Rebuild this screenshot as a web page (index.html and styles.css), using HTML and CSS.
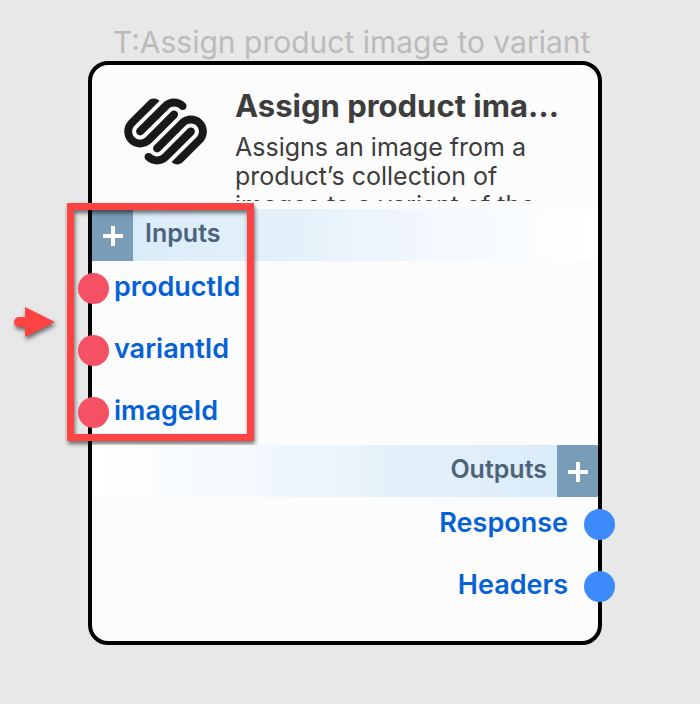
FILE: index.html
```html
<!DOCTYPE html>
<html lang="en">
<head>
<meta charset="utf-8">
<title>Assign product image to variant</title>
<link rel="stylesheet" href="styles.css">
</head>
<body>
<main class="canvas">
  <p class="node-label">T:Assign product image to variant</p>
  <article class="node">
    <header class="node-header">
      <svg class="logo" viewBox="0 2 24 20" aria-hidden="true"><path d="M22.655 8.719c-1.802-1.801-4.726-1.801-6.564 0l-7.351 7.35c-.45.45-.45 1.2 0 1.65.45.449 1.2.449 1.65 0l7.351-7.351c.899-.899 2.362-.899 3.264 0 .9.9.9 2.364 0 3.264l-7.239 7.239c.9.899 2.362.899 3.263 0l5.589-5.589c1.836-1.838 1.836-4.763.037-6.563zm-2.475 2.437c-.451-.45-1.201-.45-1.65 0l-7.354 7.389c-.9.899-2.361.899-3.262 0-.45-.45-1.2-.45-1.65 0s-.45 1.2 0 1.649c1.801 1.801 4.726 1.801 6.564 0l7.351-7.35c.449-.487.449-1.239.001-1.688zm-2.439-7.35c-1.801-1.801-4.726-1.801-6.564 0l-7.351 7.351c-.45.449-.45 1.199 0 1.649s1.2.45 1.65 0l7.395-7.351c.9-.899 2.371-.899 3.27 0 .451.45 1.201.45 1.65 0 .421-.487.421-1.199-.05-1.649zm-2.475 2.475c-.45-.449-1.2-.449-1.65 0l-7.351 7.351c-.899.9-2.362.9-3.263 0-.9-.899-.9-2.363 0-3.263l7.239-7.239c-.899-.9-2.362-.9-3.263 0L1.39 8.719c-1.801 1.8-1.801 4.725 0 6.563 1.801 1.801 4.725 1.801 6.564 0l7.35-7.351c.451-.488.451-1.238-.038-1.65z"/></svg>
      <div class="summary">
        <h1 class="title">Assign product image to variant</h1>
        <p class="description">Assigns an image from a product’s collection of images to a variant of the product.</p>
      </div>
    </header>
    <section class="inputs">
      <div class="bar">
        <button class="add" type="button" aria-label="Add input"><svg class="plus" viewBox="0 0 20 20"><path d="M10 0v20M0 10h20"/></svg></button>
        <h2 class="bar-title">Inputs</h2>
      </div>
      <ul class="ports">
        <li class="port">productId</li>
        <li class="port">variantId</li>
        <li class="port">imageId</li>
      </ul>
      <div class="highlight"></div>
      <svg class="pointer" viewBox="0 0 42 32" aria-hidden="true"><path d="M5 10h6V0l30 15-30 15V20H5a5 5 0 0 1 0-10z"/></svg>
    </section>
    <section class="outputs">
      <div class="bar">
        <button class="add" type="button" aria-label="Add output"><svg class="plus" viewBox="0 0 20 20"><path d="M10 0v20M0 10h20"/></svg></button>
        <h2 class="bar-title">Outputs</h2>
      </div>
      <ul class="ports">
        <li class="port">Response</li>
        <li class="port">Headers</li>
      </ul>
    </section>
  </article>
</main>
</body>
</html>
```
FILE: styles.css
```css
* {
  box-sizing: border-box;
}

body {
  margin: 0;
  background: #e8e8e8;
  color: #3d3d3d;
  font-family: Inter, "Liberation Sans", sans-serif;
}

h1, h2, p, ul {
  margin: 0;
  padding: 0;
}

.canvas {
  min-height: 100vh;
  padding: 24px 98px 59px 88px;
}

.node-label {
  padding-left: 25px;
  color: #bbb;
  font-size: 30px;
  line-height: 37px;
  white-space: nowrap;
}

.node {
  padding-bottom: 22px;
  border: 4px solid #000;
  border-radius: 20px;
  background: #fcfcfc;
}

.node-header {
  display: flex;
  gap: 28px;
  height: 144px;
  padding: 20px 38px 0 32px;
}

.logo {
  flex: none;
  width: 83px;
  height: 69px;
  margin-top: 12px;
  fill: #1a1917;
}

.summary {
  min-width: 0;
  height: 116px;
  overflow: hidden;
}

.title {
  overflow: hidden;
  font-size: 31px;
  font-weight: 700;
  line-height: 42px;
  text-overflow: ellipsis;
  white-space: nowrap;
}

.description {
  margin-top: 6px;
  font-size: 25px;
  line-height: 29px;
}

.inputs,
.outputs {
  position: relative;
}

.bar {
  display: flex;
  height: 52px;
  background: linear-gradient(to right, #d8eaf8, #e4f1fa 40%, #f4f9fd 70%, #fff);
}

.outputs .bar {
  flex-direction: row-reverse;
  background: linear-gradient(to left, #d8eaf8, #e4f1fa 40%, #f4f9fd 70%, #fff);
}

.add {
  display: grid;
  place-items: center;
  width: 41px;
  padding: 2px 0 0;
  border: 0;
  background: #799cb8;
}

.plus {
  width: 20px;
  height: 20px;
  fill: none;
  stroke: #fff;
  stroke-width: 4;
}

.bar-title {
  padding: 0 10px 0 12px;
  color: #4b637c;
  font-size: 25px;
  font-weight: 600;
  line-height: 48px;
}

.ports {
  margin: -1px 0;
  list-style: none;
}

.port {
  display: flex;
  align-items: center;
  gap: 5px;
  height: 62px;
  margin-left: -14px;
  padding-bottom: 10px;
  color: #0562d6;
  font-size: 27px;
  font-weight: 600;
}

.port::before {
  flex: none;
  width: 31px;
  height: 31px;
  margin-top: 4px;
  border-radius: 50%;
  background: #f55064;
  content: "";
}

.outputs .port {
  flex-direction: row-reverse;
  gap: 16px;
  margin: 0 -17px 0 0;
}

.outputs .port::before {
  background: #3d8bfb;
}

.highlight {
  position: absolute;
  top: -6px;
  left: -25px;
  width: 187px;
  height: 238px;
  border: 7px solid #ff4343;
  filter: drop-shadow(1px 3px 2px rgb(0 0 0 / 55%));
}

.pointer {
  position: absolute;
  top: 98px;
  left: -78px;
  width: 42px;
  height: 32px;
  overflow: visible;
  fill: #ff4343;
  filter: drop-shadow(1px 3px 2px rgb(0 0 0 / 55%));
}
```
